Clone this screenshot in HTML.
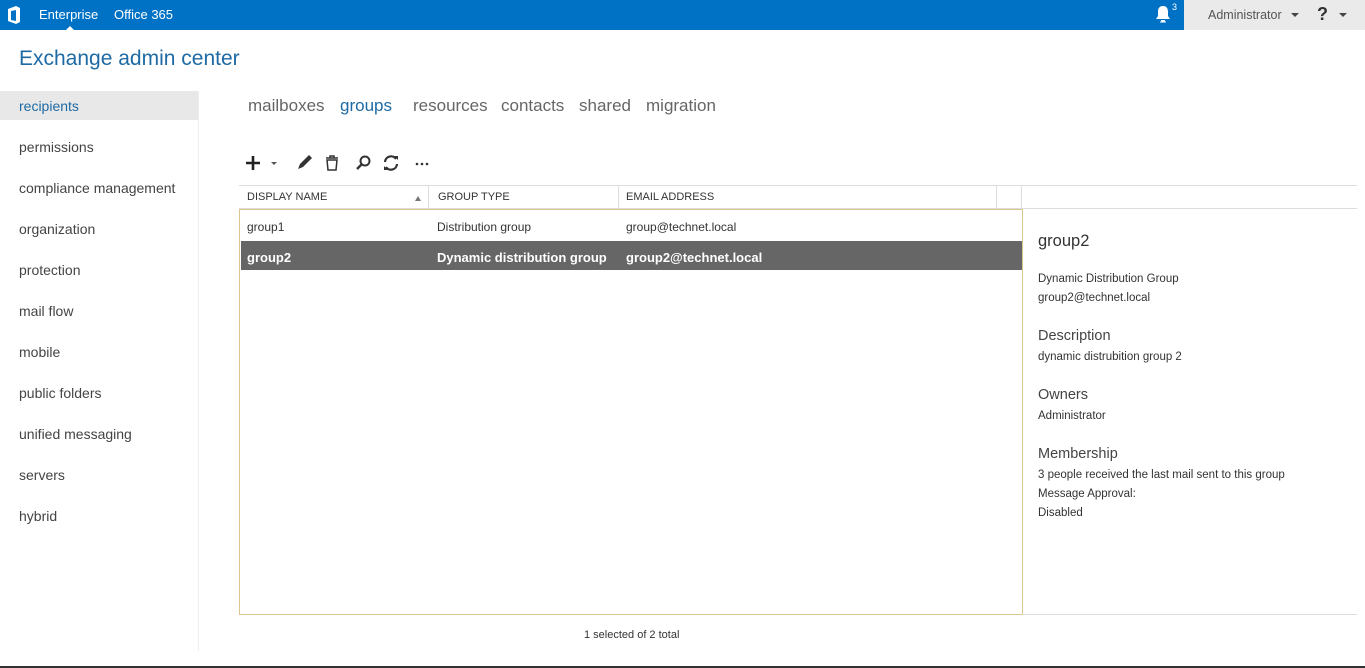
<!DOCTYPE html>
<html><head><meta charset="utf-8"><style>
*{margin:0;padding:0;box-sizing:border-box}
body{width:1365px;height:668px;position:relative;overflow:hidden;background:#fff;font-family:"Liberation Sans",sans-serif;color:#333}
.a{position:absolute;white-space:nowrap}
.top{left:0;top:0;width:1365px;height:30px;background:#0072c6}
.nav{font-size:14px;color:#444}
.sub{font-size:17px;color:#666;top:96px}
.th{font-size:11px;color:#333;top:191px}
.td{font-size:12px;color:#333}
.sel{font-size:13px;color:#fff;font-weight:bold}
.d{font-size:11.5px;color:#333}
.h{font-size:14.5px;color:#444}
</style></head><body>
<div class="a top"></div>
<svg class="a" style="left:6px;top:5px" width="16" height="20" viewBox="0 0 16 20"><path d="M2 4 L10 1 L14 3 L14 17 L10 19 L2 16 Z M5 6 L5 15 L10 16 L10 5 Z" fill="#fff" fill-rule="evenodd"/></svg>
<div class="a" style="left:39px;top:7px;color:#fff;font-size:13px">Enterprise</div>
<div class="a" style="left:66px;top:26px;width:0;height:0;border-left:4px solid transparent;border-right:4px solid transparent;border-bottom:4px solid #fff"></div>
<div class="a" style="left:114px;top:7px;color:#fff;font-size:13px">Office 365</div>
<svg class="a" style="left:1155px;top:5px" width="16" height="18" viewBox="0 0 16 18"><path d="M8 1 C4 1 3 4 3 7 L3 11 L1 14 L15 14 L13 11 L13 7 C13 4 12 1 8 1Z M6 15 A2 2 0 0 0 10 15Z" fill="#fff"/><path d="M5 17h6" stroke="#fff"/></svg>
<div class="a" style="left:1172px;top:2px;color:#fff;font-size:9px">3</div>
<div class="a" style="left:1184px;top:0;width:181px;height:30px;background:#eaeaea"></div>
<div class="a" style="left:1208px;top:8px;font-size:12.5px;color:#555">Administrator</div>
<div class="a" style="left:1291px;top:13px;border-left:4px solid transparent;border-right:4px solid transparent;border-top:4px solid #444"></div>
<div class="a" style="left:1317px;top:4px;font-size:18px;font-weight:bold;color:#333">?</div>
<div class="a" style="left:1339px;top:13px;border-left:4px solid transparent;border-right:4px solid transparent;border-top:4px solid #444"></div>
<div class="a" style="left:19px;top:47px;font-size:21px;color:#1d6aa5">Exchange admin center</div>
<div class="a" style="left:0;top:91px;width:198px;height:29px;background:#e8e8e8"></div>
<div class="a" style="left:198px;top:91px;width:1px;height:560px;background:#eee"></div>
<div class="a nav" style="left:19px;top:98px;color:#1d6aa5">recipients</div>
<div class="a nav" style="left:19px;top:139px">permissions</div>
<div class="a nav" style="left:19px;top:180px">compliance management</div>
<div class="a nav" style="left:19px;top:221px">organization</div>
<div class="a nav" style="left:19px;top:262px">protection</div>
<div class="a nav" style="left:19px;top:303px">mail flow</div>
<div class="a nav" style="left:19px;top:344px">mobile</div>
<div class="a nav" style="left:19px;top:385px">public folders</div>
<div class="a nav" style="left:19px;top:426px">unified messaging</div>
<div class="a nav" style="left:19px;top:467px">servers</div>
<div class="a nav" style="left:19px;top:508px">hybrid</div>
<div class="a sub" style="left:248px">mailboxes</div>
<div class="a sub" style="left:340px;color:#1d6aa5">groups</div>
<div class="a sub" style="left:413px">resources</div>
<div class="a sub" style="left:501px">contacts</div>
<div class="a sub" style="left:579px">shared</div>
<div class="a sub" style="left:646px">migration</div>
<svg class="a" style="left:244px;top:153px" width="190" height="20" viewBox="0 0 190 20">
<path d="M9 3V17M2 10H16" stroke="#222" stroke-width="2.6"/>
<path d="M27 9l3 3 3-3z" fill="#555"/>
<path d="M54 16l2-5 9-9 3 3-9 9z" fill="#333"/>
<path d="M82 5h12M86 5V3h4v2M83 7h10l-1 10h-8z" stroke="#333" stroke-width="1.5" fill="none"/>
<circle cx="121" cy="8" r="4.5" stroke="#333" stroke-width="2" fill="none"/><path d="M118 11l-5 5" stroke="#333" stroke-width="2.4"/>
<path d="M141 9a6 6 0 0 1 11-3M153 11a6 6 0 0 1-11 3" stroke="#333" stroke-width="2.2" fill="none"/><path d="M150 3l4 0 0 4zM144 17l-4 0 0-4z" fill="#333"/>
<circle cx="173" cy="11" r="1.3" fill="#333"/><circle cx="178" cy="11" r="1.3" fill="#333"/><circle cx="183" cy="11" r="1.3" fill="#333"/>
</svg>
<div class="a" style="left:239px;top:185px;width:1118px;height:1px;background:#ddd"></div>
<div class="a" style="left:239px;top:208px;width:1118px;height:1px;background:#ddd"></div>
<div class="a" style="left:428px;top:186px;width:1px;height:22px;background:#ddd"></div>
<div class="a" style="left:618px;top:186px;width:1px;height:22px;background:#ddd"></div>
<div class="a" style="left:996px;top:186px;width:1px;height:22px;background:#ddd"></div>
<div class="a" style="left:1021px;top:186px;width:1px;height:22px;background:#ddd"></div>
<div class="a th" style="left:247px">DISPLAY NAME</div>
<div class="a" style="left:415px;top:196px;border-left:3.5px solid transparent;border-right:3.5px solid transparent;border-bottom:5px solid #777"></div>
<div class="a th" style="left:438px">GROUP TYPE</div>
<div class="a th" style="left:626px">EMAIL ADDRESS</div>
<div class="a" style="left:239px;top:209px;width:784px;height:406px;border:1px solid #dcc58f"></div>
<div class="a td" style="left:247px;top:220px">group1</div>
<div class="a td" style="left:437px;top:220px">Distribution group</div>
<div class="a td" style="left:626px;top:220px">group@technet.local</div>
<div class="a" style="left:241px;top:241px;width:781px;height:29px;background:#666"></div>
<div class="a sel" style="left:247px;top:250px">group2</div>
<div class="a sel" style="left:437px;top:250px">Dynamic distribution group</div>
<div class="a sel" style="left:626px;top:250px">group2@technet.local</div>
<div class="a" style="left:1022px;top:614px;width:335px;height:1px;background:#ddd"></div>
<div class="a" style="left:584px;top:629px;font-size:11px">1 selected of 2 total</div>
<div class="a" style="left:1038px;top:232px;font-size:16.5px;color:#333">group2</div>
<div class="a d" style="left:1038px;top:273px">Dynamic Distribution Group</div>
<div class="a d" style="left:1038px;top:292px">group2@technet.local</div>
<div class="a h" style="left:1038px;top:328px">Description</div>
<div class="a d" style="left:1038px;top:351px">dynamic distrubition group 2</div>
<div class="a h" style="left:1038px;top:387px">Owners</div>
<div class="a d" style="left:1038px;top:410px">Administrator</div>
<div class="a h" style="left:1038px;top:446px">Membership</div>
<div class="a d" style="left:1038px;top:469px">3 people received the last mail sent to this group</div>
<div class="a d" style="left:1038px;top:488px">Message Approval:</div>
<div class="a d" style="left:1038px;top:507px">Disabled</div>
<div class="a" style="left:0;top:666px;width:1365px;height:2px;background:#333"></div>
</body></html>
